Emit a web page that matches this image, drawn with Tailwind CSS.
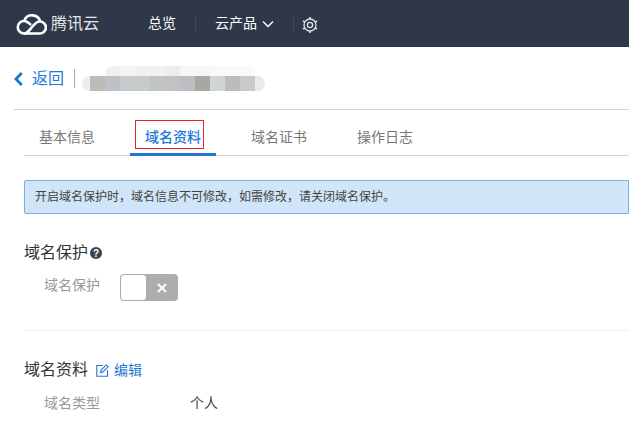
<!DOCTYPE html>
<html lang="zh-CN">
<head>
    <meta charset="UTF-8">
    <meta name="viewport" content="width=device-width, initial-scale=1.0">
    <title>域名资料</title>
    <script src="https://cdn.jsdelivr.net/npm/@tailwindcss/browser@4"></script>
</head>
<body class="bg-white w-[629px] h-[423px] overflow-hidden font-['Liberation_Sans','Noto_Sans_CJK_SC',sans-serif] text-[14px] text-[#444]">
    <!-- 顶部导航 -->
    <header class="h-[47px] bg-[#2e3849] flex items-center text-white">
        <svg class="ml-[16px] w-[31px] h-[22px]" viewBox="0 0 31 22" fill="none" stroke="#fff" stroke-width="2.6">
            <path d="M8 20.500h15.500a6 6 0 0 0 .8-12 8.500 8.500 0 0 0-16-1"/>
            <path d="M23.500 8.500c-3 0-5 2.500-7.500 5.500s-4.500 6.500-8 6.500a6 6 0 0 1 0-12.500c3 0 5 2 7 4"/>
        </svg>
        <span class="ml-[4px] w-[48px] text-[16px] text-[#e4e6e9] whitespace-nowrap">腾讯云</span>
        <span class="ml-[49px] text-[14px]">总览</span>
        <span class="ml-[19px] w-px h-[19px] bg-[#3d4759]"></span>
        <span class="ml-[19px] text-[14px]">云产品</span>
        <svg class="ml-[5px] w-[12px] h-[8px]" viewBox="0 0 12 8" fill="none" stroke="#fff" stroke-width="1.500"><path d="M1 1.500l5 5 5-5"/></svg>
        <span class="ml-[19px] w-px h-[19px] bg-[#3d4759]"></span>
        <svg class="ml-[8px] mt-[3px] w-[16px] h-[16px]" viewBox="0 0 16 16" fill="none" stroke="#dfe2e6">
            <circle cx="8" cy="8" r="6" stroke-width="1.300"/>
            <circle cx="8" cy="8" r="2.600" stroke-width="1.300"/>
            <path stroke-width="1.600" d="M8 0v2M8 14v2M1 4l1.700 1M13.300 11l1.700 1M1 12l1.700-1M13.300 5L15 4"/>
        </svg>
    </header>

    <!-- 返回行 -->
    <div class="ml-[14px] h-[63px] border-b border-[#d4d4d4] flex items-center">
        <svg class="w-[9px] h-[14px] mt-[1px]" viewBox="0 0 9 14" fill="none" stroke="#1a76d2" stroke-width="2.800"><path d="M7.800 1L2 7l5.800 6"/></svg>
        <span class="ml-[9px] mt-[2px] text-[16px] text-[#2277da]">返回</span>
        <span class="ml-[10px] w-px h-[19px] bg-[#aaa]"></span>
        <!-- 打码的域名 -->
        <div class="ml-[7px] flex flex-col w-[183px] h-[25px]">
            <div class="flex h-[10px] pl-[23px]">
                <i class="w-[15px] bg-[#f0f0f0] rounded-tl-lg"></i><i class="w-[15px] bg-[#f3f4f4]"></i><i class="w-[30px] bg-[#f0f1f1]"></i><i class="w-[15px] bg-[#ecedef]"></i><i class="w-[30px] bg-[#f5f6f5]"></i><i class="w-[45px] bg-[#f8f9f9] rounded-tr-lg"></i>
            </div>
            <div class="flex h-[15px]">
                <i class="w-[8px] bg-[#eceeee] rounded-l-lg"></i><i class="w-[15px] bg-[#bdbdb8]"></i><i class="w-[15px] bg-[#bcc2c5]"></i><i class="w-[15px] bg-[#c8cbcb]"></i><i class="w-[15px] bg-[#c8cbcb]"></i><i class="w-[15px] bg-[#c0c4c4]"></i><i class="w-[15px] bg-[#c3c0c6]"></i><i class="w-[15px] bg-[#c0bdc2]"></i><i class="w-[15px] bg-[#a8a7a1]"></i><i class="w-[15px] bg-[#d0d6d8]"></i><i class="w-[15px] bg-[#bbbcbd]"></i><i class="w-[15px] bg-[#c9c9cb]"></i><i class="w-[10px] bg-[#e8ebec] rounded-r-lg"></i>
            </div>
        </div>
    </div>

    <div class="ml-[24px]">
        <!-- 标签页 -->
        <nav class="mt-[9px] h-[37px] border-b border-[#d4d4d4] flex text-[#777]">
            <a class="w-[106px] pl-[15px] pt-[8px]">基本信息</a>
            <a class="relative w-[86px] h-[37px] pl-[15px] pt-[8px] border-b-[3px] border-[#1f74d8] font-medium text-[#2277da]">
                域名资料
                <span class="absolute left-[5px] top-[1px] w-[69px] h-[29px] border border-[#e8262a]"></span>
            </a>
            <a class="w-[106px] pl-[35px] pt-[8px]">域名证书</a>
            <a class="w-[106px] pl-[35px] pt-[8px]">操作日志</a>
        </nav>

        <!-- 提示 -->
        <div class="mt-[24px] h-[34px] pl-[10px] flex items-center bg-[#d0e5f7] border border-[#76b1e6] rounded-l-[2px] text-[12px] text-[#444] whitespace-nowrap">开启域名保护时，域名信息不可修改，如需修改，请关闭域名保护。</div>

        <!-- 域名保护 -->
        <div class="mt-[28px] h-[22px] flex items-center text-[16px] text-[#333]">
            域名保护
            <span class="ml-[2px] w-[12px] h-[12px] rounded-full bg-[#3c4454] text-white text-[10px] font-bold flex items-center justify-center">?</span>
        </div>
        <div class="mt-[10px] ml-[20px] flex items-start">
            <span class="w-[76px] mt-[1px] text-[14px] text-[#999]">域名保护</span>
            <div class="w-[58px] h-[27px] p-[1px] rounded-[4px] bg-[#adadad] flex items-center">
                <span class="w-[25px] h-[25px] rounded-[3px] bg-white"></span>
                <svg class="ml-[11px] w-[10px] h-[10px]" viewBox="0 0 10 10" stroke="#fff" stroke-width="2"><path d="M1 1l8 8M9 1l-8 8"/></svg>
            </div>
        </div>
        <div class="mt-[29px] h-px bg-[#eeeff3]"></div>

        <!-- 域名资料 -->
        <div class="mt-[28px] h-[22px] flex items-center text-[16px] text-[#333]">
            域名资料
            <svg class="ml-[8px] w-[13px] h-[13px]" viewBox="0 0 13 13" fill="none" stroke="#2277da" stroke-width="1.100"><path d="M7 1.500H.8v10.700h10.700V6"/><path d="M4.500 8.500l.6-2.500L10.300.9l1.900 1.900-5.200 5.100z"/></svg>
            <span class="ml-[5px] text-[14px] text-[#2277da]">编辑</span>
        </div>
        <div class="mt-[12px] ml-[20px] flex items-center">
            <span class="w-[146px] text-[14px] text-[#999]">域名类型</span>
            <span class="text-[14px] text-[#444]">个人</span>
        </div>
    </div>
</body>
</html>
